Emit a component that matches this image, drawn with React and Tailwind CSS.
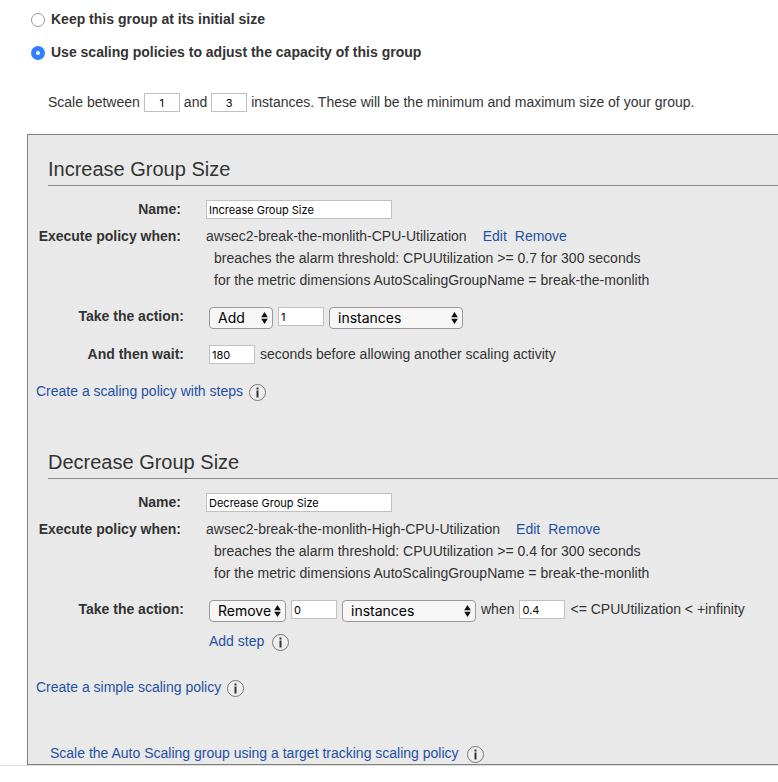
import React from "react";

const inputBase =
  "h-[19px] shrink-0 border border-[#c0c0c0] bg-white font-['Inter',sans-serif] text-[11px] leading-4 text-black outline-none rounded-none";

function TextField({ id, label, value, className }) {
  return (
    <input
      id={id}
      type="text"
      aria-label={label}
      defaultValue={value}
      className={`${inputBase} ${className}`}
    />
  );
}

function Select({ id, label, options, className }) {
  return (
    <span className={`relative inline-block h-[22px] shrink-0 ${className}`}>
      <select
        id={id}
        aria-label={label}
        className="block h-full w-full appearance-none rounded border border-[#999999] bg-[#f6f6f6] pl-2 font-['Inter',sans-serif] text-[14px] leading-5 text-black outline-none"
      >
        {options.map((option) => (
          <option key={option}>{option}</option>
        ))}
      </select>
      <svg
        aria-hidden="true"
        viewBox="0 0 7 12"
        className="pointer-events-none absolute top-[5px] right-[5px] h-3 w-[7px]"
        fill="#111"
      >
        <path d="M3.5 0 6.8 5.2H.2zM3.5 12 .2 6.8h6.6z" />
      </svg>
    </span>
  );
}

function Info() {
  return (
    <svg aria-hidden="true" viewBox="0 0 17 18" className="h-[18px] w-[17px] shrink-0">
      <circle cx="8.5" cy="9.5" r="8" fill="#eeeeee" stroke="#777777" />
      <path d="M7.5 4.5h2v2h-2zM7.5 7.5h2v7h-2z" fill="#333333" />
    </svg>
  );
}

function Link({ children }) {
  return (
    <a href="#" className="whitespace-nowrap text-[#1f51a3]">
      {children}
    </a>
  );
}

function PolicyHeading({ children }) {
  return (
    <h2 className="ml-5 h-[51px] border-b border-[#888888] pt-[22px] text-[20px] leading-6">
      {children}
    </h2>
  );
}

function PolicyDetails({ id, name, alarm, threshold }) {
  return (
    <>
      <div className="mt-[14px] flex gap-[25px]">
        <label htmlFor={id} className="w-[153px] text-right font-bold leading-[19px]">
          Name:
        </label>
        <TextField id={id} value={name} className="w-[186px] px-[2px]" />
      </div>
      <div className="mt-[6px] flex gap-[25px] leading-[22px]">
        <span className="w-[153px] shrink-0 whitespace-nowrap text-right font-bold">
          Execute policy when:
        </span>
        <div className="whitespace-nowrap">
          <p className="flex gap-4">
            <span>{alarm}</span>
            <span className="flex gap-2">
              <Link>Edit</Link>
              <Link>Remove</Link>
            </span>
          </p>
          <p className="pl-2">
            breaches the alarm threshold: CPUUtilization &gt;= {threshold} for 300 seconds
          </p>
          <p className="pl-2">
            for the metric dimensions AutoScalingGroupName = break-the-monlith
          </p>
        </div>
      </div>
    </>
  );
}

export default function App() {
  return (
    <main className="overflow-x-hidden bg-white font-['Liberation_Sans',Arial,sans-serif] text-[14px] leading-[19px] text-[#333333]">
      <div className="flex flex-col gap-[14px] pt-[10px] pl-[31px] font-bold">
        <label className="flex items-center gap-[6px]">
          <input
            type="radio"
            name="mode"
            className="h-[14px] w-[14px] appearance-none rounded-full border border-[#999999] bg-white checked:border-[5px] checked:border-[#2f80ff]"
          />
          Keep this group at its initial size
        </label>
        <label className="flex items-center gap-[6px]">
          <input
            type="radio"
            name="mode"
            defaultChecked
            className="h-[14px] w-[14px] appearance-none rounded-full border border-[#999999] bg-white checked:border-[5px] checked:border-[#2f80ff]"
          />
          Use scaling policies to adjust the capacity of this group
        </label>
      </div>

      <div className="mt-[31px] flex gap-1 whitespace-nowrap pl-12">
        <label htmlFor="min-size">Scale between</label>
        <TextField id="min-size" value="1" className="w-9 text-center" />
        <label htmlFor="max-size">and</label>
        <TextField id="max-size" value="3" className="w-9 text-center" />
        <span>instances. These will be the minimum and maximum size of your group.</span>
      </div>

      <div className="border-b border-[#dddddd] pt-[22px] pl-[27px]">
        <div className="border-y border-l border-[#808080] bg-[#e9e9e9]">
          <section className="pb-[27px]">
            <PolicyHeading>Increase Group Size</PolicyHeading>
            <PolicyDetails
              id="increase-name"
              name="Increase Group Size"
              alarm="awsec2-break-the-monlith-CPU-Utilization"
              threshold="0.7"
            />
            <div className="mt-4 flex gap-[25px]">
              <label htmlFor="increase-action" className="w-[156px] text-right font-bold">
                Take the action:
              </label>
              <div className="flex gap-[5px]">
                <Select id="increase-action" options={["Add", "Remove", "Set to"]} className="w-16" />
                <TextField label="Amount to add" value="1" className="w-[46px] px-[2px]" />
                <Select
                  label="Unit to add"
                  options={["instances", "percent of group"]}
                  className="w-[134px]"
                />
              </div>
            </div>
            <div className="mt-4 flex gap-[25px]">
              <label htmlFor="cooldown" className="w-[156px] text-right font-bold">
                And then wait:
              </label>
              <div className="flex gap-[5px] whitespace-nowrap">
                <TextField id="cooldown" value="180" className="w-[46px] px-[2px]" />
                <span>seconds before allowing another scaling activity</span>
              </div>
            </div>
            <div className="mt-[18px] flex items-center gap-[6px] pl-2">
              <Link>Create a scaling policy with steps</Link>
              <Info />
            </div>
          </section>

          <section>
            <PolicyHeading>Decrease Group Size</PolicyHeading>
            <PolicyDetails
              id="decrease-name"
              name="Decrease Group Size"
              alarm="awsec2-break-the-monlith-High-CPU-Utilization"
              threshold="0.4"
            />
            <div className="mt-4 flex gap-[25px]">
              <label
                htmlFor="decrease-action"
                className="w-[156px] shrink-0 text-right font-bold"
              >
                Take the action:
              </label>
              <div className="flex gap-[5px] whitespace-nowrap">
                <Select
                  id="decrease-action"
                  options={["Remove", "Add", "Set to"]}
                  className="w-[77px]"
                />
                <TextField label="Amount to remove" value="0" className="w-[46px] px-[2px]" />
                <Select
                  label="Unit to remove"
                  options={["instances", "percent of group"]}
                  className="w-[134px]"
                />
                <label htmlFor="lower-bound">when</label>
                <TextField id="lower-bound" value="0.4" className="w-[46px] px-[2px]" />
                <span>&lt;= CPUUtilization &lt; +infinity</span>
              </div>
            </div>
            <div className="mt-[10px] flex items-center gap-2 pl-[181px]">
              <Link>Add step</Link>
              <Info />
            </div>
            <div className="mt-[27px] flex items-center gap-[6px] pl-2">
              <Link>Create a simple scaling policy</Link>
              <Info />
            </div>
          </section>

          <div className="mt-[47px] flex items-center gap-2 pb-px pl-[22px]">
            <Link>Scale the Auto Scaling group using a target tracking scaling policy</Link>
            <Info />
          </div>
        </div>
      </div>
    </main>
  );
}
